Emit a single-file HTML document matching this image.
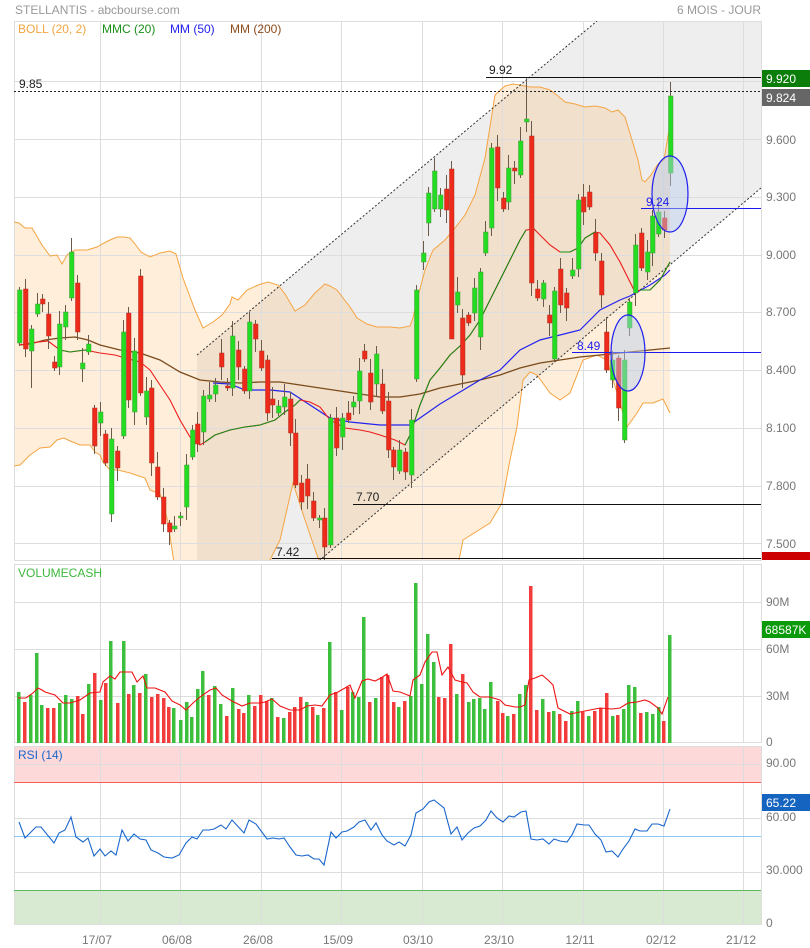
<!DOCTYPE html>
<html><head><meta charset="utf-8">
<style>
html,body{margin:0;padding:0;background:#fff;width:810px;height:948px;overflow:hidden}
svg{display:block;font-family:"Liberation Sans",Arial,sans-serif}
</style></head>
<body>
<svg id="s" width="810" height="948" viewBox="0 0 810 948" xmlns="http://www.w3.org/2000/svg">
<defs>
<clipPath id="cm"><rect x="14" y="21" width="747" height="539"/></clipPath>
</defs>
<text x="15" y="14" font-size="12" fill="#999">STELLANTIS - abcbourse.com</text>
<text x="761" y="14" font-size="12" fill="#999" text-anchor="end">6 MOIS - JOUR</text>

<g clip-path="url(#cm)">
<polygon points="197,355 597,21 761,21 761,188 320,560 197,560" fill="#000" fill-opacity="0.065"/>
<path id="boll" fill="#f8a844" fill-opacity="0.2" stroke="none" d=""/>
</g>
<g stroke="#ddd" stroke-width="1" fill="none" id="gridm">
<rect x="14.5" y="21.5" width="747" height="539"/>
<path d="M100.5 21V560M180.5 21V560M261.5 21V560M341.5 21V560M422.5 21V560M502.5 21V560M583.5 21V560M663.5 21V560M743.5 21V560"/>
<path d="M14 81.5H761M14 139.5H761M14 197.5H761M14 255.5H761M14 312.5H761M14 370.5H761M14 428.5H761M14 486.5H761M14 543.5H761"/>
</g>
<g clip-path="url(#cm)" fill="none">
<path id="bu" stroke="#f5a442" stroke-width="1"/>
<path id="bl" stroke="#f5a442" stroke-width="1"/>
<line x1="197" y1="355" x2="597" y2="21" stroke="#333" stroke-dasharray="2,2"/>
<line x1="761" y1="188" x2="320" y2="560" stroke="#333" stroke-dasharray="2,2"/>
<polyline stroke="#7a4a1a" stroke-width="1.3" points="19,345 30,344 45,340 60,338 75,337 88,340 100,345 120,350 140,353 160,360 180,372 200,380 220,382 240,383 260,382 280,382 300,385 320,388 340,391 360,394 380,397 400,397 420,394 440,388 460,384 480,380 500,375 520,368 540,363 560,360 580,357 600,355 620,353 640,351 670,348"/>
<polyline stroke="#2323ee" stroke-width="1.2" points="213,383 230,384 245,390 270,390 290,392 310,405 330,418 350,422 380,425 410,425 420,418 440,404 460,392 480,380 500,370 520,350 540,340 560,335 580,330 600,310 620,300 630,296 650,285 665,275 670,270"/>
<polyline stroke="#ee1c1c" stroke-width="1.1" points="19,345 30,343 48,341 60,350 70,352 85,350 100,353 115,355 125,358 140,362 150,370 160,385 170,400 180,420 190,437 200,445 205,442 215,435 230,430 245,427 260,425 275,420 285,412 295,405 300,400 310,402 320,407 330,420 345,428 360,430 370,432 380,435 395,440 405,445 410,435 420,405 430,380 440,368 450,355 460,346 470,335 480,320 490,300 500,280 510,260 520,240 526,230 534,229 540,235 550,245 560,252 570,252 578,248 585,238 595,232 600,233 610,245 620,262 628,278 635,292 640,290 650,290 660,280 670,262"/>
<g stroke="#1a8f1a" stroke-width="1.1">
<polyline points="60,350 70,352 85,350 90,351"/>
<polyline points="205,442 215,435 230,430 245,427 260,425 275,420 285,412 295,405 300,400"/>
<polyline points="405,445 410,435 420,405 430,380 440,368 450,355 460,346 470,335 480,320 490,300 500,280 510,260 520,240 526,230"/>
<polyline points="560,252 570,252 578,248 585,238 595,232"/>
<polyline points="640,290 650,290 660,280 670,262"/>
</g>
<g id="cand"></g>
<line x1="14" y1="91.5" x2="761" y2="91.5" stroke="#222" stroke-dasharray="2,2"/>
<line x1="486" y1="77.5" x2="761" y2="77.5" stroke="#111"/>
<line x1="353" y1="504.5" x2="761" y2="504.5" stroke="#111"/>
<line x1="272" y1="558.5" x2="761" y2="558.5" stroke="#111"/>
<line x1="641" y1="208.5" x2="761" y2="208.5" stroke="#1a1aee"/>
<line x1="572" y1="352.5" x2="761" y2="352.5" stroke="#1a1aee"/>
<ellipse cx="670" cy="194" rx="18" ry="38" fill="#b8cdee" fill-opacity="0.45" stroke="#2020ee" stroke-width="1.2"/>
<ellipse cx="628" cy="353" rx="17" ry="38" fill="#b8cdee" fill-opacity="0.45" stroke="#2020ee" stroke-width="1.2"/>
</g>
<g font-size="12">
<text x="18" y="33" fill="#f5a442">BOLL (20, 2)</text>
<text x="102" y="33" fill="#1a8f1a">MMC (20)</text>
<text x="170" y="33" fill="#2222ee">MM (50)</text>
<text x="230" y="33" fill="#8b4a1a">MM (200)</text>
<text x="19" y="88" fill="#222">9.85</text>
<text x="489" y="74" fill="#222">9.92</text>
<text x="356" y="501" fill="#222">7.70</text>
<text x="276" y="556" fill="#222">7.42</text>
<text x="646" y="206" fill="#2020ee">9.24</text>
<text x="577" y="350" fill="#2020ee">8.49</text>
</g>
<g font-size="12" fill="#777">
<text x="766" y="144">9.600</text><text x="766" y="201">9.300</text><text x="766" y="259">9.000</text>
<text x="766" y="316">8.700</text><text x="766" y="374">8.400</text><text x="766" y="432">8.100</text>
<text x="766" y="490">7.800</text><text x="766" y="548">7.500</text>
</g>
<rect x="762" y="70" width="48" height="17" fill="#0a7d0a"/><text x="766" y="83" font-size="12" fill="#fff">9.920</text>
<rect x="762" y="89" width="48" height="17" fill="#666"/><text x="766" y="102" font-size="12" fill="#fff">9.824</text>
<rect x="762" y="552" width="48" height="8" fill="#c00"/>

<g stroke="#ddd" fill="none">
<rect x="14.5" y="564.5" width="747" height="178"/>
<path d="M100.5 564V742M180.5 564V742M261.5 564V742M341.5 564V742M422.5 564V742M502.5 564V742M583.5 564V742M663.5 564V742M743.5 564V742"/>
<path d="M14 602.5H761M14 649.5H761M14 696.5H761"/>
</g>
<g id="vol"></g>
<polyline fill="none" stroke="#ee1111" stroke-width="1.1" points="18,698 26,698 33,693 38,688 42,690 45,692 55,695 63,703 70,703 80,700 90,693 100,692 103,682 110,676 115,679 120,672 127,672 132,672 137,682 143,676 147,688 155,688 165,692 172,701 180,705 186,710 193,703 200,697 210,690 216,688 222,695 232,701 242,706 250,703 260,703 265,702 272,699 280,706 290,710 300,710 307,706 315,705 322,706 330,695 338,692 345,688 350,685 355,698 362,681 368,679 375,681 381,678 387,674 393,691 400,692 410,696 413,680 420,675 425,662 432,652 437,652 442,675 448,667 455,680 462,682 467,683 473,692 480,697 490,697 500,700 505,705 515,707 520,707 525,705 529,680 535,678 542,675 548,680 553,685 558,708 570,714 580,712 590,710 600,708 612,709 620,708 628,703 637,702 645,700 650,702 658,708 662,714 668,697"/>
<text x="18" y="577" font-size="12" fill="#3cb83c">VOLUMECASH</text>
<g font-size="12" fill="#777">
<text x="766" y="606">90M</text><text x="766" y="653">60M</text><text x="766" y="700">30M</text><text x="766" y="746">0</text>
</g>
<rect x="762" y="621" width="48" height="17" fill="#0a9a0a"/><text x="765" y="634" font-size="12" fill="#fff">68587K</text>

<rect x="14" y="746" width="747" height="36" fill="#fdd9d9"/>
<rect x="14" y="890" width="747" height="35" fill="#d9ead3"/>
<g stroke="#ddd" fill="none">
<rect x="14.5" y="746.5" width="747" height="178"/>
<path d="M100.5 746V925M180.5 746V925M261.5 746V925M341.5 746V925M422.5 746V925M502.5 746V925M583.5 746V925M663.5 746V925M743.5 746V925"/>
<path d="M14 764.5H761M14 818.5H761M14 872.5H761"/>
</g>
<line x1="14" y1="782.5" x2="761" y2="782.5" stroke="#f06060"/>
<line x1="14" y1="890.5" x2="761" y2="890.5" stroke="#5cb85c"/>
<line x1="14" y1="836.5" x2="761" y2="836.5" stroke="#8cc8f5"/>
<polyline fill="none" stroke="#1a66cc" stroke-width="1.1" points="19,822 25,838 36,827 41,827 54,843 59,833 65,830 71,817 76,837 83,842 88,838 94,856 100,849 105,856 111,851 116,855 122,830 128,841 134,834 140,839 146,840 151,850 158,853 164,857 172,858 179,855 186,843 192,837 197,839 203,830 209,830 214,829 221,825 226,829 232,820 244,833 249,820 256,824 267,839 273,838 279,839 284,838 290,847 296,855 302,856 308,855 314,859 319,859 324,865 331,832 336,838 342,832 347,831 354,827 359,822 365,820 371,830 376,823 382,835 387,841 394,845 399,842 405,846 411,835 416,813 423,809 429,802 434,800 444,808 451,834 457,827 462,840 468,833 474,828 480,826 486,820 491,811 497,818 503,822 509,816 514,817 521,812 526,811 531,839 537,840 543,839 549,844 554,839 560,841 567,842 572,835 577,824 584,825 589,825 595,834 601,840 606,852 612,851 618,857 623,849 629,841 635,829 640,831 647,831 652,824 658,824 664,826 670,809"/>
<text x="18" y="759" font-size="12" fill="#1a66cc">RSI (14)</text>
<g font-size="12" fill="#777">
<text x="766" y="767">90.00</text><text x="766" y="821">60.00</text><text x="766" y="874">30.000</text><text x="766" y="927">0</text>
</g>
<rect x="762" y="794" width="48" height="17" fill="#1565c0"/><text x="766" y="807" font-size="12" fill="#fff">65.22</text>
<g font-size="12" fill="#777" text-anchor="middle">
<text x="97" y="944">17/07</text><text x="177" y="944">06/08</text><text x="258" y="944">26/08</text>
<text x="338" y="944">15/09</text><text x="418" y="944">03/10</text><text x="499" y="944">23/10</text>
<text x="580" y="944">12/11</text><text x="661" y="944">02/12</text><text x="741" y="944">21/12</text>
</g>
</svg>
<script>
(function(){
var NS="http://www.w3.org/2000/svg";
function el(p,t,a){var e=document.createElementNS(NS,t);for(var k in a)e.setAttribute(k,a[k]);p.appendChild(e);return e;}
var up=[[14,222],[19,223],[25,228],[32,228],[42,245],[50,256],[57,255],[62,264],[67,255],[75,250],[87,250],[97,247],[104,243],[110,240],[117,237],[124,237],[130,238],[135,244],[141,252],[150,257],[160,253],[170,251],[176,254],[183,278],[195,310],[203,328],[213,322],[222,315],[230,304],[232,297],[238,300],[247,290],[258,285],[268,282],[278,285],[285,294],[295,311],[305,305],[315,293],[325,284],[330,286],[337,290],[343,298],[350,307],[357,318],[367,324],[377,327],[390,327],[400,328],[410,326],[413,318],[417,300],[425,270],[433,250],[445,240],[455,228],[465,215],[475,195],[485,158],[495,95],[505,86],[513,84],[520,85],[530,87],[540,87],[550,90],[558,96],[565,102],[575,104],[585,107],[595,106],[605,108],[612,112],[618,110],[625,117],[632,140],[638,160],[642,180],[645,182],[651,175],[658,164],[664,160],[670,124]];
var lo=[[14,466],[20,465],[30,455],[40,448],[50,447],[57,440],[64,438],[70,441],[80,445],[90,445],[95,452],[100,455],[103,462],[110,470],[118,470],[130,473],[145,478],[150,490],[160,494],[168,522],[175,570],[260,570],[270,560],[280,540],[293,483],[305,520],[318,558],[330,580],[455,580],[463,540],[490,523],[502,503],[510,460],[517,427],[523,380],[530,372],[537,375],[550,393],[560,400],[570,393],[583,360],[597,355],[607,360],[617,393],[627,427],[637,413],[643,403],[653,403],[663,399],[670,413]];
function pts(a){return a.map(function(p){return p.join(",")}).join(" L");}
document.getElementById("bu").setAttribute("d","M"+pts(up));
document.getElementById("bl").setAttribute("d","M"+pts(lo));
var rl=lo.slice().reverse();
document.getElementById("boll").setAttribute("d","M"+pts(up)+" L"+pts(rl)+"Z");
var C=[[19,290,343,1],[25,289,349,0],[31,329,351,1],[37,304,314,1],[42,299,304,0],[48,314,336,0],[54,362,368,0],[59,324,367,1],[65,312,327,1],[71,252,298,1],[77,283,332,0],[82,363,369,1],[88,344,352,1],[94,408,446,0],[100,412,423,1],[105,434,463,0],[111,439,514,1],[117,451,468,0],[123,332,436,1],[128,313,400,0],[134,351,412,1],[140,276,393,0],[146,391,417,1],[151,388,463,0],[157,467,497,0],[163,497,524,0],[169,523,532,0],[174,526,529,1],[180,516,518,1],[186,465,507,1],[192,430,457,1],[197,424,444,0],[203,396,432,1],[209,395,399,1],[215,385,394,1],[221,353,367,0],[227,386,388,0],[232,336,388,1],[238,350,367,0],[244,369,391,0],[249,322,391,1],[255,324,339,0],[261,351,368,0],[267,360,413,0],[272,399,405,0],[278,406,413,1],[284,397,407,1],[290,399,433,0],[295,433,485,0],[301,483,502,0],[307,479,496,0],[313,501,518,0],[319,518,520,1],[324,518,547,0],[330,418,545,1],[336,418,448,0],[342,418,437,1],[348,413,420,0],[353,402,407,1],[359,371,401,1],[364,351,359,0],[370,373,402,0],[376,354,384,1],[382,384,411,0],[388,401,450,0],[393,450,467,0],[399,450,471,1],[405,452,472,0],[411,420,475,1],[416,290,379,1],[423,253,262,1],[428,193,223,1],[434,171,209,1],[440,195,209,1],[446,189,210,0],[451,169,339,0],[457,292,305,1],[462,318,375,0],[468,315,323,0],[474,288,313,1],[480,272,337,1],[485,232,253,1],[491,148,228,1],[497,147,188,0],[503,198,209,0],[508,168,202,1],[514,168,171,0],[520,141,175,1],[526,119,122,1],[531,136,283,0],[537,289,298,0],[543,283,299,1],[549,315,323,0],[554,291,359,1],[560,269,305,0],[566,293,308,0],[572,270,276,1],[578,200,269,1],[583,197,212,0],[589,192,207,0],[595,233,253,0],[601,261,295,0],[606,332,370,0],[612,360,380,1],[618,358,408,0],[624,360,440,1],[629,302,328,1],[635,245,293,1],[641,233,268,0],[647,252,272,1],[652,216,253,1],[658,212,234,1],[664,218,230,0],[670,96,173,1]];
var g=document.getElementById("cand");
C.forEach(function(c,i){
 var t=Math.min(c[1],c[2]),b=Math.max(c[1],c[2]);
 var wt=t-(3+(i*7)%13),wb=b+(3+(i*5)%15);
 if(c[0]==526){wt=77;wb=132;} if(c[0]==670){wt=82;}
 if(c[0]==31){wb=388;} if(c[0]==451){wb=339;}
 el(g,"line",{x1:c[0]+0.5,y1:wt,x2:c[0]+0.5,y2:wb,stroke:"#6b5a4a","stroke-width":1});
 el(g,"rect",{x:c[0]-1.5,y:t,width:4.5,height:Math.max(2,b-t),fill:c[3]?"#22dd22":"#ee2a1a",stroke:c[3]?"#4a9a3a":"#b03020","stroke-width":0.5});
});
var V=[[18,692,1],[24,702,0],[30,695,1],[36,653,1],[41,705,1],[47,708,0],[53,708,0],[59,703,1],[65,695,1],[71,699,1],[77,696,0],[82,714,0],[88,684,1],[94,673,0],[100,700,1],[105,683,0],[110,641,1],[117,703,0],[123,641,1],[128,694,0],[133,685,1],[139,693,0],[145,674,1],[151,697,0],[157,694,0],[163,698,0],[168,707,0],[173,708,1],[180,720,1],[186,702,1],[191,717,1],[197,689,1],[202,671,1],[208,695,0],[214,686,1],[220,704,1],[226,716,0],[232,688,1],[238,709,0],[243,713,0],[248,695,1],[254,706,0],[260,695,0],[266,701,0],[271,698,1],[277,717,0],[283,718,1],[289,712,0],[294,707,0],[300,697,0],[306,702,1],[312,707,0],[317,715,1],[323,708,0],[329,642,1],[335,692,0],[341,710,1],[347,687,0],[352,692,1],[358,697,1],[363,617,1],[369,702,0],[375,698,1],[381,677,0],[387,675,0],[393,702,0],[398,707,1],[404,701,0],[410,696,1],[415,583,1],[421,684,1],[427,634,1],[433,662,1],[438,697,0],[444,698,0],[450,644,0],[456,694,1],[462,674,0],[468,702,1],[473,699,1],[479,698,1],[484,709,1],[490,682,1],[497,701,0],[502,713,0],[507,716,1],[513,714,0],[519,694,1],[525,685,1],[530,586,0],[536,710,0],[542,699,1],[548,712,0],[553,711,1],[559,714,0],[565,721,0],[571,711,1],[577,701,1],[582,712,0],[588,716,1],[594,711,0],[600,708,0],[606,693,0],[612,716,1],[617,715,0],[623,709,1],[628,685,1],[634,687,1],[640,713,0],[646,712,1],[652,714,1],[658,707,1],[663,721,0],[669,635,1]];
var vg=document.getElementById("vol");
V.forEach(function(v){el(vg,"rect",{x:v[0]-1,y:v[1],width:3.5,height:743-v[1],fill:v[2]?"#3cbf3c":"#f23c3c"});});
})();
</script>
</body></html>
